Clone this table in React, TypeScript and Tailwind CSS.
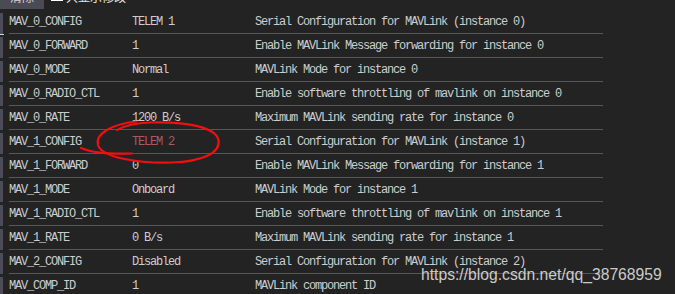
type Param = {
  name: string;
  value: string;
  desc: string;
  changed?: boolean;
};

const params: Param[] = [
  { name: "MAV_0_CONFIG", value: "TELEM 1", desc: "Serial Configuration for MAVLink (instance 0)" },
  { name: "MAV_0_FORWARD", value: "1", desc: "Enable MAVLink Message forwarding for instance 0" },
  { name: "MAV_0_MODE", value: "Normal", desc: "MAVLink Mode for instance 0" },
  { name: "MAV_0_RADIO_CTL", value: "1", desc: "Enable software throttling of mavlink on instance 0" },
  { name: "MAV_0_RATE", value: "1200 B/s", desc: "Maximum MAVLink sending rate for instance 0" },
  { name: "MAV_1_CONFIG", value: "TELEM 2", desc: "Serial Configuration for MAVLink (instance 1)", changed: true },
  { name: "MAV_1_FORWARD", value: "0", desc: "Enable MAVLink Message forwarding for instance 1" },
  { name: "MAV_1_MODE", value: "Onboard", desc: "MAVLink Mode for instance 1" },
  { name: "MAV_1_RADIO_CTL", value: "1", desc: "Enable software throttling of mavlink on instance 1" },
  { name: "MAV_1_RATE", value: "0 B/s", desc: "Maximum MAVLink sending rate for instance 1" },
  { name: "MAV_2_CONFIG", value: "Disabled", desc: "Serial Configuration for MAVLink (instance 2)" },
  { name: "MAV_COMP_ID", value: "1", desc: "MAVLink component ID" },
];

const ParamRow = ({ p, first }: { p: Param; first?: boolean }) => {
  return (
    <div className="relative flex h-[24px] items-start">
      {/* row header strip on the left */}
      <div className="mt-[3px] h-[21px] w-[3px] shrink-0 bg-[#4e4b5a]" />
      {first && <div className="absolute left-0 top-[24px] h-[1px] w-[4px] bg-[#d8d8d8]" />}
      <div className="ml-[6px] flex h-[24px] w-[594px] items-center border-b border-[#575757] text-[12px] tracking-[-1.2px] text-[#cdcdcd]">
        <span className="w-[123px] shrink-0 whitespace-pre">{p.name}</span>
        <span className={`w-[123px] shrink-0 whitespace-pre ${p.changed ? "text-[#a95a60]" : ""}`}>{p.value}</span>
        <span className="whitespace-pre">{p.desc}</span>
      </div>
    </div>
  );
};

const App = () => {
  return (
    <div className="relative h-[294px] w-[675px] overflow-hidden bg-[#232323] font-['Liberation_Mono',monospace]">
      {/* toolbar, scrolled mostly out of view */}
      <div className="-mt-[15px] flex h-[24px] items-center gap-[7px] font-['Noto_Sans_CJK_SC',sans-serif] text-[12px] text-[#e6e6e6]">
        <button className="flex h-[24px] w-[44px] items-center justify-center bg-[#4b4a55] text-[#d8d8d8]">清除</button>
        <div className="flex items-center gap-[3px]">
          <div className="mt-[-4px] h-[12px] w-[12px] bg-white" />
          <span>只显示修改</span>
        </div>
      </div>
      <div className="mt-[1px]">
        {params.map((p, i) => (
          <ParamRow key={p.name} p={p} first={i === 0} />
        ))}
      </div>

      {/* red hand-drawn annotation */}
      <svg className="pointer-events-none absolute left-0 top-0" width="675" height="294" fill="none">
        <path
          d="M136 121.5 C112 124, 95 134, 98 145 C102 158, 140 163.5, 172 162.5 C202 161.5, 221 153, 218.5 140 C216 128, 190 121.5, 150 122.5 C136 123, 124 126, 117 130"
          stroke="#f01010"
          strokeWidth="2.2"
          strokeLinecap="round"
        />
        <path d="M81 148 C90 152, 102 154.5, 132 153.5" stroke="#f01010" strokeWidth="2.2" strokeLinecap="round" />
      </svg>

      {/* watermark */}
      <div className="absolute left-[421px] top-[267px] font-['Liberation_Sans',sans-serif] text-[15.7px] leading-none text-[#cbcbcb]">
        https://blog.csdn.net/qq_38768959
      </div>
    </div>
  );
};

export default App;
